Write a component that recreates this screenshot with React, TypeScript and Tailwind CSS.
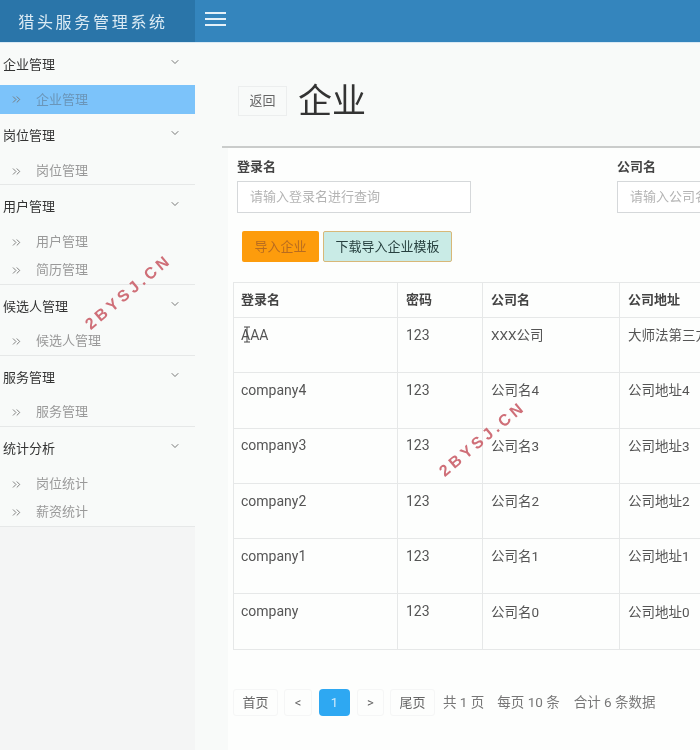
import type { ReactNode } from "react";
import { ChevronDown, ChevronsRight } from "lucide-react";

const font = "font-['Roboto','Noto_Sans_CJK_SC',sans-serif]";

const menu = [
  { title: "企业管理", items: ["企业管理"], h: "h-[71px]", first: true, nudge: false },
  { title: "岗位管理", items: ["岗位管理"], h: "h-[71px]", nudge: true },
  { title: "用户管理", items: ["用户管理", "简历管理"], h: "h-[100px]", nudge: true },
  { title: "候选人管理", items: ["候选人管理"], h: "h-[71px]", nudge: false },
  { title: "服务管理", items: ["服务管理"], h: "h-[71px]", nudge: false },
  { title: "统计分析", items: ["岗位统计", "薪资统计"], h: "h-[100px]", nudge: true },
];

const rows = [
  ["AAA", "123", "XXX公司", "大师法第三方"],
  ["company4", "123", "公司名4", "公司地址4"],
  ["company3", "123", "公司名3", "公司地址3"],
  ["company2", "123", "公司名2", "公司地址2"],
  ["company1", "123", "公司名1", "公司地址1"],
  ["company", "123", "公司名0", "公司地址0"],
];

function Watermark({ className }: { className: string }) {
  return (
    <div className={`absolute z-10 rotate-[-40deg] whitespace-nowrap font-['Liberation_Sans',sans-serif] text-[16px] font-semibold tracking-[3.6px] text-[#cf6f78] ${className}`}>
      2BYSJ.CN
    </div>
  );
}

function Sidebar() {
  return (
    <aside className="w-[195px] shrink-0 bg-[#f8faf9]">
      {menu.map((s) => (
        <section key={s.title} className={`${s.h} border-b border-[#e6e8e8]`}>
          <div className="relative flex h-[42px] items-center pl-[3px] pt-[1px] text-[13px] text-[#333]">
            {s.title}
            <ChevronDown className="absolute left-[169px] top-[13px] text-[#555]" size={12} strokeWidth={1.6} />
          </div>
          <div className={s.nudge ? "pt-[1px]" : ""}>
            {s.items.map((it) => (
              <div
                key={it}
                className={`flex items-center gap-[14px] pl-[10px] text-[13px] ${s.first ? "h-[29px] bg-[#7cc3fa] text-[#6a95b8]" : "h-[28px] text-[#999]"}`}
              >
                <ChevronsRight size={13} strokeWidth={1.7} className="text-[#777]" />
                <span className="-ml-[1px]">{it}</span>
              </div>
            ))}
          </div>
        </section>
      ))}
      <div className="h-[224px] bg-[#f4f5f5]" />
    </aside>
  );
}

function Field({ label, placeholder, className }: { label: string; placeholder: string; className: string }) {
  return (
    <div className={className}>
      <div className="mb-[5px] h-[18px] text-[13px] font-semibold leading-[18px] text-[#444]">{label}</div>
      <div className="flex h-[32px] w-[234px] items-center overflow-hidden whitespace-nowrap border border-[#d5d8da] bg-white pl-[12px] text-[13px] text-[#b4b4b4]">
        {placeholder}
      </div>
    </div>
  );
}

function Page({ children, className = "" }: { children: ReactNode; className?: string }) {
  return (
    <div className={`flex h-[27px] items-center justify-center rounded-[3px] border border-[#f5f6f6] text-[13px] text-[#666] ${className}`}>
      {children}
    </div>
  );
}

export default function App() {
  return (
    <div className={`relative h-[750px] w-[700px] overflow-hidden bg-[#f8faf9] blur-[0.4px] ${font}`}>
      <header className="flex h-[43px] border-b border-[#d9e9f4] bg-[#3485bd]">
        <div className="flex w-[195px] items-center justify-center bg-[#2a75a9] pr-[9px] font-['Noto_Sans_CJK_SC',serif] text-[16px] tracking-[2.7px] text-[#dcebf4]">
          猎头服务管理系统
        </div>
        <div className="mb-[4px] ml-[10px] flex flex-col justify-center gap-[4px]">
          <span className="h-[2px] w-[21px] bg-[#e4f0f8]" />
          <span className="h-[2px] w-[21px] bg-[#e4f0f8]" />
          <span className="h-[2px] w-[21px] bg-[#e4f0f8]" />
        </div>
      </header>

      <div className="flex">
        <Sidebar />
        <main className="min-w-0 flex-1">
          <div className="flex h-[103px] items-center pl-[43px] pt-[10px]">
            <div className="mt-[3px] flex h-[30px] w-[49px] items-center justify-center border border-[#eceeee] text-[13px] text-[#666]">
              返回
            </div>
            <h1 className="ml-[11px] mt-[2px] text-[34px] leading-none text-[#333]">企业</h1>
          </div>

          <div className="ml-[27px] border-t-2 border-[#cacccb]">
            <div className="ml-[6px] h-[602px] bg-[#fdfefd] pl-[5px]">
              <div className="flex pl-[4px] pt-[10px]">
                <Field label="登录名" placeholder="请输入登录名进行查询" className="w-[380px] shrink-0" />
                <Field label="公司名" placeholder="请输入公司名进行查询" className="shrink-0" />
              </div>

              <div className="flex gap-[4px] pl-[9px] pt-[18px]">
                <button className="h-[31px] w-[77px] rounded-[2px] bg-[#fd9c0c] text-[13px] text-[#b86c20]">导入企业</button>
                <button className="h-[31px] w-[129px] rounded-[2px] border border-[#d8b878] bg-[#c9ebe6] text-[13px] text-[#27403f]">下载导入企业模板</button>
              </div>

              <table className="mt-[20px] w-[560px] table-fixed border-collapse text-[14px] text-[#555]">
                <colgroup>
                  <col className="w-[164px]" />
                  <col className="w-[85px]" />
                  <col className="w-[137px]" />
                  <col className="w-[174px]" />
                </colgroup>
                <thead>
                  <tr className="h-[35px] border-y border-[#e6e8e8] text-left text-[13px] font-semibold text-[#444]">
                    {["登录名", "密码", "公司名", "公司地址"].map((h, j) => (
                      <th key={h} className={`border-x border-[#e6e8e8] font-semibold ${j === 0 ? "pl-[7px]" : "pl-[8px]"}`}>{h}</th>
                    ))}
                  </tr>
                </thead>
                <tbody>
                  {rows.map((r, i) => (
                    <tr key={i} className="h-[55.3px] border-b border-[#e6e8e8]">
                      {r.map((c, j) => (
                        <td
                          key={j}
                          className={`relative overflow-hidden whitespace-nowrap border-x border-[#e6e8e8] pb-[25px] pt-[5px] ${j === 0 ? "pl-[7px]" : "pl-[8px]"} ${j > 1 ? "text-[13.5px]" : "text-[14px]"}`}
                        >
                          {c}
                          {i === 0 && j === 0 && (
                            <svg className="absolute left-[9px] top-[8px]" width="8" height="17" viewBox="0 0 8 17" fill="none" stroke="#444" strokeWidth="1">
                              <path d="M1 1h6M4 1v15M1 16h6" />
                            </svg>
                          )}
                        </td>
                      ))}
                    </tr>
                  ))}
                </tbody>
              </table>

              <div className="flex items-center pt-[39px]">
                <Page className="w-[45px]">首页</Page>
                <Page className="ml-[6px] w-[28px]">&lt;</Page>
                <div className="ml-[7px] flex h-[27px] w-[31px] items-center justify-center rounded-[4px] bg-[#2ea8f2] text-[13px] text-[#cfeafb]">1</div>
                <Page className="ml-[7px] w-[27px]">&gt;</Page>
                <Page className="ml-[6px] w-[45px]">尾页</Page>
                <span className="ml-[8px] whitespace-nowrap text-[13.5px] text-[#777]">共 1 页</span>
                <span className="ml-[13px] whitespace-nowrap text-[13.5px] text-[#777]">每页 10 条</span>
                <span className="ml-[14px] whitespace-nowrap text-[13.5px] text-[#777]">合计 6 条数据</span>
              </div>
            </div>
          </div>
        </main>
      </div>

      <Watermark className="left-[75px] top-[280px]" />
      <Watermark className="left-[429px] top-[427px]" />
    </div>
  );
}
